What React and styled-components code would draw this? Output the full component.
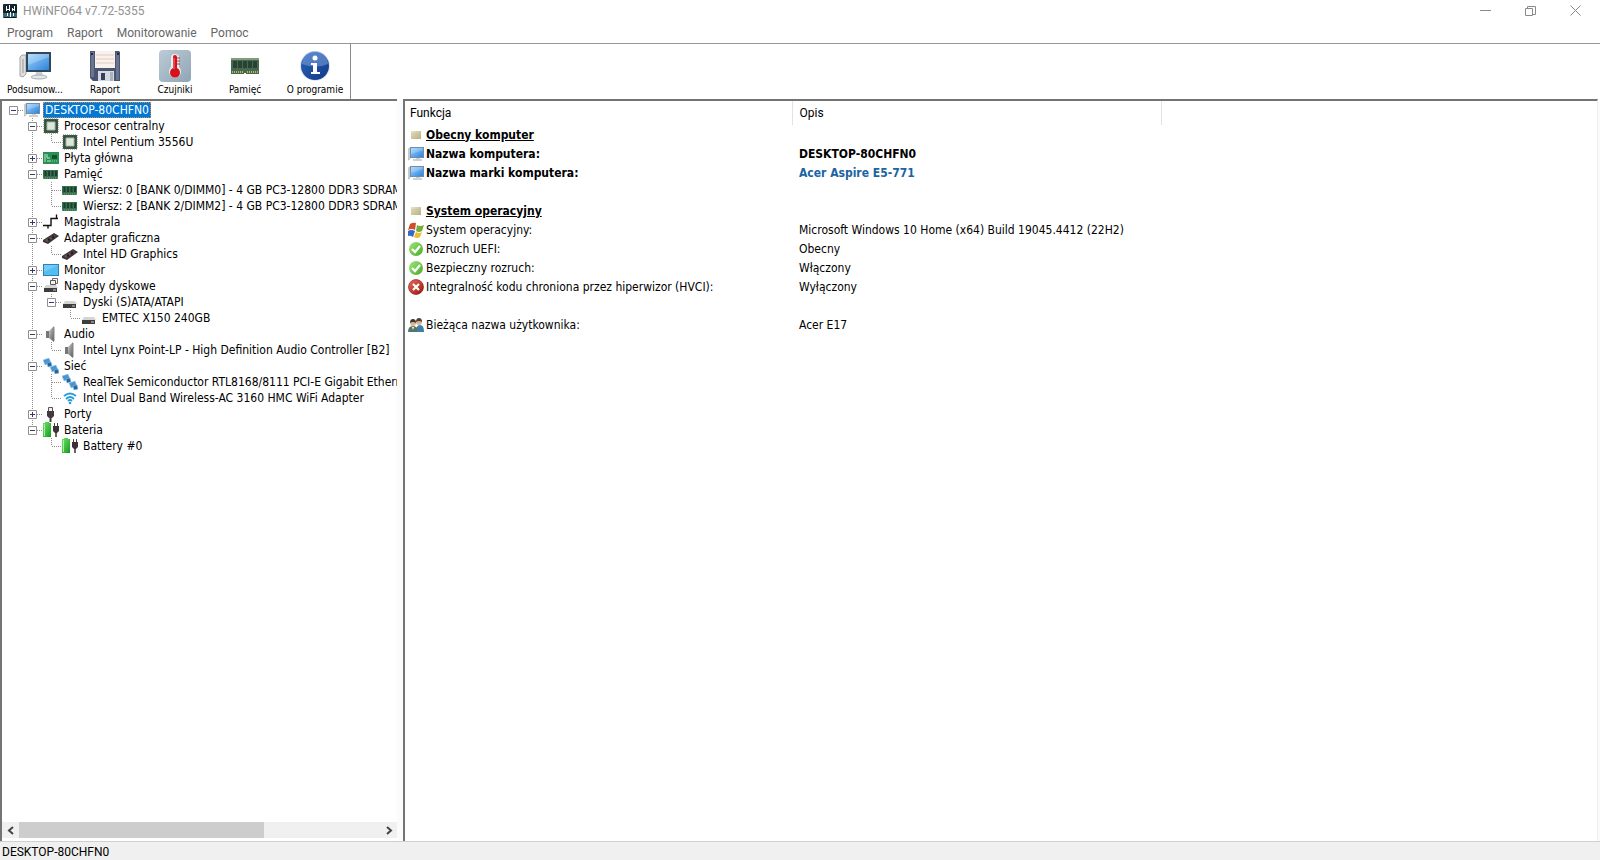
import React, { useState } from 'react';
import styled, { createGlobalStyle, css } from 'styled-components';

const uiFont = 'Roboto, "Noto Sans", sans-serif';
const listFont = '"DejaVu Sans Condensed", "DejaVu Sans", sans-serif';

const GlobalStyle = createGlobalStyle`
  * {
    box-sizing: border-box;
  }

  body {
    margin: 0;
    overflow: hidden;
    background: #fff;
    color: #000;
    font-family: ${listFont};
    font-size: 12px;
  }

  button {
    margin: 0;
    padding: 0;
    border: 0;
    background: none;
    color: inherit;
    font: inherit;
  }
`;

const Window = styled.div`
  display: flex;
  flex-direction: column;
  height: 100vh;
`;

const TitleBar = styled.header`
  display: flex;
  align-items: center;
  height: 22px;
  padding: 0 2px;
  color: #929292;
  font-family: ${uiFont};

  h1 {
    flex: 1;
    margin: 0;
    padding-left: 5px;
    font-size: 12px;
    font-weight: 400;
  }
`;

const WindowButton = styled.button`
  display: flex;
  align-items: center;
  justify-content: center;
  width: 45px;
  height: 20px;
  align-self: flex-start;
`;

const MenuBar = styled.nav`
  display: flex;
  height: 22px;
  border-bottom: 1px solid #979797;
  color: #666;
  font-family: ${uiFont};

  button {
    padding: 0 7px;
  }
`;

const ToolBar = styled.div`
  display: flex;
  align-self: flex-start;
  height: 55px;
  border-right: 1px solid #8a8a8a;
`;

const ToolButton = styled.button`
  display: flex;
  flex-direction: column;
  align-items: center;
  gap: 1px;
  width: 70px;
  padding-top: 6px;
  line-height: 14px;
  font-size: 10px;
`;

const Panels = styled.main`
  display: flex;
  flex: 1;
  gap: 6px;
  min-height: 0;
  padding-right: 2px;
  background: #fbfbfb;
`;

const panelBorder = css`
  border-top: 2px solid #747474;
  border-left: 2px solid #747474;
  background: #fff;
`;

const TreePanel = styled.section`
  ${panelBorder}
  display: flex;
  flex-direction: column;
  flex: 0 0 397px;
  min-width: 0;
`;

const Tree = styled.ul`
  flex: 1;
  margin: 0;
  padding: 1px 0 0 2px;
  overflow: hidden;
  list-style: none;

  ul {
    margin: 0;
    padding: 0;
    list-style: none;
  }
`;

const TreeRow = styled.div`
  display: flex;
  align-items: center;
  height: 16px;
  white-space: nowrap;
`;

const dotsDown = 'repeating-linear-gradient(#8d8d8d 0 1px, transparent 1px 2px)';
const dotsAcross =
  'repeating-linear-gradient(90deg, #8d8d8d 0 1px, transparent 1px 2px)';

const guides = {
  none: 'none',
  root: `${dotsAcross} 10px 8px / 9px 1px no-repeat`,
  line: `${dotsDown} 9px 0 / 1px 16px no-repeat`,
  tee: `${dotsDown} 9px 0 / 1px 16px no-repeat, ${dotsAcross} 10px 8px / 9px 1px no-repeat`,
  elbow: `${dotsDown} 9px 0 / 1px 8px no-repeat, ${dotsAcross} 10px 8px / 9px 1px no-repeat`,
};

const Guide = styled.span`
  display: flex;
  flex: none;
  align-items: center;
  justify-content: center;
  width: 19px;
  height: 16px;
  background: ${({ $kind }) => guides[$kind]};
`;

const Expander = styled.button`
  display: flex;
  width: 9px;
  height: 9px;
  background: #fff;
`;

const TreeItem = styled.span`
  display: flex;
  gap: 3px;
  padding-left: 1px;
`;

const TreeLabel = styled.span`
  height: 16px;
  padding: 0 2px;
  line-height: 16px;

  ${({ $selected }) =>
    $selected &&
    css`
      outline: 1px dotted #d98a3a;
      outline-offset: -1px;
      background: #0078d7;
      color: #fff;
    `};
`;

const ScrollBar = styled.div`
  display: flex;
  height: 16px;
  margin-bottom: 3px;
  background: #f0f0f0;

  button {
    display: flex;
    align-items: center;
    justify-content: center;
    width: 17px;
  }
`;

const ScrollTrack = styled.div`
  flex: 1;
`;

const ScrollThumb = styled.div`
  width: 68%;
  height: 100%;
  background: #cdcdcd;
`;

const DetailsPanel = styled.section`
  ${panelBorder}
  flex: 1;
  min-width: 0;
  border-right: 1px solid #efefef;
`;

const DetailsTable = styled.table`
  width: 100%;
  border-collapse: collapse;
  table-layout: fixed;

  th {
    height: 24px;
    padding: 0 5px 1px;
    border-right: 1px solid #e2e2e2;
    font-family: ${uiFont};
    font-weight: 400;
    text-align: left;
  }

  th:last-child {
    border-right: 0;
  }

  td {
    height: 19px;
    padding: 0 5px;
    line-height: 16px;
    white-space: nowrap;
  }

  td:first-child {
    padding-left: 3px;
  }

  th + th,
  td + td {
    padding-left: 7px;
  }
`;

const Column = styled.col`
  width: ${({ $width }) => $width};
`;

const Feature = styled.span`
  display: flex;
  align-items: center;
  gap: 2px;
  font-weight: ${({ $bold }) => ($bold ? 700 : 400)};
  text-decoration: ${({ $heading }) => ($heading ? 'underline' : 'none')};
`;

const Value = styled.span`
  color: ${({ $color }) => $color || 'inherit'};
  font-weight: ${({ $bold }) => ($bold ? 700 : 400)};
`;

const StatusBar = styled.footer`
  height: 19px;
  padding-left: 2px;
  border-top: 1px solid #d0d0d0;
  background: #f0f0f0;
  font-family: ${uiFont};
  line-height: 20px;
`;

const IconBox = styled.svg`
  display: block;
  flex: none;
`;

const Gradient = ({ id, from, to }) => (
  <linearGradient id={id} x1="0" y1="0" x2="1" y2="1">
    <stop offset="0" stopColor={from} />
    <stop offset="1" stopColor={to} />
  </linearGradient>
);

const Gradients = () => (
  <IconBox width="0" height="0" aria-hidden="true">
    <defs>
      <Gradient id="screen" from="#9bd3fb" to="#2f83dc" />
      <Gradient id="horn" from="#d2d2d2" to="#555" />
      <Gradient id="cell" from="#6fe36a" to="#159a1c" />
      <Gradient id="info" from="#2b62ba" to="#123a86" />
      <Gradient id="sensor" from="#bccbd6" to="#8fa5b5" />
      <Gradient id="good" from="#a4e67c" to="#45ab27" />
      <Gradient id="bad" from="#e8705c" to="#9c130b" />
      <Gradient id="tan" from="#e8e4c4" to="#b4ac80" />
      <Gradient id="logo" from="#1b2a33" to="#0b1a22" />
    </defs>
  </IconBox>
);

const plugShape = (
  <>
    <path d="M10.500 1v4M13.500 1v4" stroke="#444" />
    <path d="M9 4h6v5l-2 2h-2L9 9z" fill="#3a3236" />
    <path d="M12 10v5" stroke="#3a3236" strokeWidth="1.500" />
  </>
);

const driveShape = (
  <>
    <path d="M3 7h10l2 3H1z" fill="#d5d5d5" />
    <path d="M1 10h13v4H1z" fill="#3d3d3d" />
    <path d="M10 12h3" stroke="#cfcfcf" />
  </>
);

const networkNode = (
  <>
    <path d="M0 2l6-2 2 5-6 2z" fill="#4796d2" stroke="#a5cfea" strokeWidth=".6" />
    <path d="M4 5l4-1 1 4-4 1z" fill="#24659f" stroke="#8cb9d8" strokeWidth=".6" />
  </>
);

const icons = {
  logo: [
    16,
    <>
      <rect x="1" y="1" width="14" height="14" rx="1" fill="url(#logo)" />
      <path d="M1 10h14v4H1z" fill="#4d9aab" opacity=".6" />
      <path d="M4.500 3v5M7.500 2v6M10.500 5v3M12.500 3v5" stroke="#fff" />
      <path d="M4.500 6.500h3M10.500 6.500h2" stroke="#fff" />
      <path d="M5.500 10v3M8.500 9v5M11.500 10v3" stroke="#fff" />
    </>,
  ],
  computer: [
    32,
    <>
      <path d="M1 7l2-2h4v19l-3 3-3-1z" fill="#dedede" stroke="#a5a5a5" />
      <path d="M4 9v14" stroke="#999" />
      <path d="M17 22h6l1 5h-8z" fill="#c9ced2" />
      <ellipse cx="20" cy="27" rx="8" ry="2" fill="#e4e7e9" stroke="#a9afb3" />
      <path d="M7 2h25v20H7z" fill="#30475c" />
      <path d="M9 4h21v16H9z" fill="url(#screen)" />
      <path d="M9 4h21v3L9 15z" fill="#fff" opacity=".22" />
    </>,
  ],
  pc: [
    16,
    <>
      <path d="M0 3l2-1v11l-1 1H0z" fill="#d6d6d6" stroke="#b0b0b0" strokeWidth=".6" />
      <path d="M2 1h14v11H2z" fill="#6c8fae" />
      <path d="M3 2h12v9H3z" fill="url(#screen)" />
      <path d="M3 2h12v2L3 8z" fill="#fff" opacity=".2" />
      <path d="M8 12h4v1h2v2H5v-2h3z" fill="#cdd2d6" />
    </>,
  ],
  floppy: [
    32,
    <>
      <path d="M1 1h29l1 1v29H4l-3-3z" fill="#485471" />
      <path d="M2 2h3v25H2zM27 3h3v27h-3z" fill="#69748f" />
      <path d="M6 1h20v17H6z" fill="#faf1ed" />
      <path d="M7 5h18M7 9h18M7 13h18" stroke="#e2cbc4" />
      <path d="M9 21h16v10H9z" fill="#d5dbe1" />
      <path d="M12 23h4v7h-4z" fill="#35405d" />
      <path d="M21 22h3v9h-3z" fill="#aab4bf" />
      <path d="M2 3h2v2H2zM28 3h2v2h-2z" fill="#1f2940" />
    </>,
  ],
  sensors: [
    32,
    <>
      <rect x="0" y="0" width="32" height="32" rx="4" fill="url(#sensor)" />
      <path d="M12 8a4 4 0 0 1 8 0v9a6 6 0 1 1-8 0z" fill="#e9eef1" />
      <path d="M14 7a2 2 0 0 1 4 0v11a5 5 0 1 1-4 0z" fill="#d5121c" />
      <path d="M18 8h3M18 11h3M18 14h3" stroke="#b33d43" />
      <path d="M15 8v11" stroke="#f18288" />
    </>,
  ],
  memory: [
    32,
    <>
      <path d="M2 8h28v16H17v-1h-2v1H2z" fill="#456a50" />
      <path d="M2 8h28v2H2z" fill="#7f9b80" />
      <path d="M4 11h4v7H4zM9 11h4v7H9zM14 11h4v7h-4zM19 11h4v7h-4zM24 11h4v7h-4z" fill="#2b4133" />
      <path d="M3 22h11M18 22h11" stroke="#bdb36c" strokeWidth="2" strokeDasharray="1 1" />
    </>,
  ],
  about: [
    32,
    <>
      <circle cx="16" cy="16" r="15" fill="#dce5f1" />
      <circle cx="16" cy="16" r="14" fill="url(#info)" />
      <path d="M3 14a13 13 0 0 1 26 0q-12 5-26 0z" fill="#7ba3dc" opacity=".55" />
      <circle cx="16" cy="8" r="2.500" fill="#fff" />
      <path d="M12 13h6v9h3v2h-9v-2h2v-7h-2z" fill="#fff" />
    </>,
  ],
  cpu: [
    16,
    <>
      <path d="M1 1h14v14H1z" fill="#36513f" />
      <path d="M1 1h14v14H1z" stroke="#5b735f" strokeDasharray="1 1" />
      <path d="M4 4h8v8H4z" fill="#dce8dc" stroke="#a5b8a6" />
    </>,
  ],
  board: [
    16,
    <>
      <path d="M0 2h16v12H0z" fill="#279052" />
      <path d="M2 4v8M4 11h4M4 4v4h3" stroke="#bde5c6" fill="none" />
      <path d="M9 5h5v4H9z" fill="#164f30" />
      <path d="M9 11h5" stroke="#8ed2a1" strokeDasharray="1 1" />
    </>,
  ],
  ram: [
    16,
    <>
      <path d="M0 4h15v9H0z" fill="#37704f" />
      <path d="M2.500 5v5M6 5v5M9.500 5v5M13 5v5" stroke="#1c3e2c" strokeWidth="2" />
      <path d="M0 12h15" stroke="#81a68b" strokeDasharray="1 1" />
    </>,
  ],
  bus: [
    16,
    <path d="M0 11.500h5v3M5 11.500h3v-7h7M13.500 4.500v-4" fill="none" stroke="#111" strokeWidth="1.400" />,
  ],
  gpu: [
    16,
    <>
      <path d="M0 10l11-7 5 3-11 8-5-2z" fill="#40343a" />
      <path d="M2 10l9-5 2 1-9 6z" fill="#645359" />
      <path d="M5 10l2-1M9 8l2-2" stroke="#251b20" strokeWidth="2" />
    </>,
  ],
  monitor: [
    16,
    <>
      <path d="M0 2h16v12H0z" fill="#2a83b5" />
      <path d="M1 3h14v10H1z" fill="#56bdf1" />
      <path d="M1 3h14L1 10z" fill="#74cbf6" />
    </>,
  ],
  drives: [
    16,
    <>
      {driveShape}
      <path d="M7.500 2.500h5v4h-5z" fill="#f3f3f3" stroke="#555" />
      <path d="M9.500 2.500v-2h5v5h-2" fill="none" stroke="#666" />
    </>,
  ],
  drive: [16, driveShape],
  speaker: [
    16,
    <>
      <path d="M3 5h3v7H3z" fill="#777" />
      <path d="M6 5l5-5v16l-5-4z" fill="url(#horn)" />
      <path d="M11 1v14" stroke="#888" />
    </>,
  ],
  network: [
    16,
    <>
      {networkNode}
      <g transform="translate(7 7)">{networkNode}</g>
    </>,
  ],
  wifi: [
    16,
    <>
      <path d="M2 6q6-5 12 0M4 9q4-4 8 0M6 11q2-2 4 0" stroke="#2b9ed8" strokeWidth="1.800" fill="none" />
      <circle cx="8" cy="13" r="1.300" fill="#2b9ed8" />
    </>,
  ],
  port: [
    16,
    <>
      <path d="M5.500 1.500h4v4h-4z" fill="#eee" stroke="#555" />
      <path d="M4 5h7v5l-2 2H6l-2-2z" fill="#41393d" />
      <path d="M7.500 12v4" stroke="#41393d" strokeWidth="2" />
    </>,
  ],
  battery: [
    16,
    <>
      <path d="M2 0h4v1h2v14H0V1h2z" fill="url(#cell)" />
      <path d="M1.500 2v12" stroke="#a6f29f" />
      <g transform="translate(1 0)">{plugShape}</g>
    </>,
  ],
  group: [
    16,
    <>
      <path d="M3 4h10v8H3z" fill="url(#tan)" />
      <path d="M3 7h10M3 10h10" stroke="#c9c29b" strokeWidth=".6" />
    </>,
  ],
  windows: [
    16,
    <>
      <path d="M2 2q3-2 6-1L7 8Q4 6 0 8z" fill="#cf4f2b" />
      <path d="M9 3q3 2 7 0l-2 6q-3 2-6 0z" fill="#73ad3b" />
      <path d="M0 9q3-2 7 0l-2 6q-3-2-5-1z" fill="#3768c4" />
      <path d="M8 10q3 2 6 0l-2 5q-3 2-6 0z" fill="#e8bd2e" />
    </>,
  ],
  good: [
    16,
    <>
      <circle cx="8" cy="8" r="7" fill="url(#good)" />
      <path d="M4 8l3 3 5-6" fill="none" stroke="#fff" strokeWidth="2.200" />
    </>,
  ],
  bad: [
    16,
    <>
      <circle cx="8" cy="8" r="7.500" fill="url(#bad)" stroke="#7c140d" strokeWidth=".6" />
      <path d="M5 5l6 6M11 5l-6 6" stroke="#fff" strokeWidth="2.200" />
    </>,
  ],
  users: [
    16,
    <>
      <path d="M8 15q0-7 4-7t4 7z" fill="#3f7eaa" />
      <circle cx="11" cy="5" r="3" fill="#d8b493" />
      <path d="M8 5q0-4 3-4t3 4q-3-2-6 0z" fill="#4f4034" />
      <path d="M0 15q0-6 5-6t5 6z" fill="#54766a" />
      <circle cx="5" cy="6" r="3" fill="#deb891" />
      <path d="M2 6q0-4 3-4t3 4q-3-2-6 0z" fill="#3b342d" />
      <path d="M4 10l1 3 1-3z" fill="#fff" />
    </>,
  ],
};

const Icon = ({ name, size = 16 }) => {
  const [box, shape] = icons[name];
  return (
    <IconBox width={size} height={size} viewBox={`0 0 ${box} ${box}`} fill="none" aria-hidden="true">
      {shape}
    </IconBox>
  );
};

const menus = ['Program', 'Raport', 'Monitorowanie', 'Pomoc'];

const tools = [
  { icon: 'computer', label: 'Podsumow...' },
  { icon: 'floppy', label: 'Raport' },
  { icon: 'sensors', label: 'Czujniki' },
  { icon: 'memory', label: 'Pamięć' },
  { icon: 'about', label: 'O programie' },
];

const devices = {
  icon: 'pc',
  label: 'DESKTOP-80CHFN0',
  open: true,
  items: [
    {
      icon: 'cpu',
      label: 'Procesor centralny',
      open: true,
      items: [{ icon: 'cpu', label: 'Intel Pentium 3556U' }],
    },
    { icon: 'board', label: 'Płyta główna', items: [] },
    {
      icon: 'ram',
      label: 'Pamięć',
      open: true,
      items: [
        { icon: 'ram', label: 'Wiersz: 0 [BANK 0/DIMM0] - 4 GB PC3-12800 DDR3 SDRAM' },
        { icon: 'ram', label: 'Wiersz: 2 [BANK 2/DIMM2] - 4 GB PC3-12800 DDR3 SDRAM' },
      ],
    },
    { icon: 'bus', label: 'Magistrala', items: [] },
    {
      icon: 'gpu',
      label: 'Adapter graficzna',
      open: true,
      items: [{ icon: 'gpu', label: 'Intel HD Graphics' }],
    },
    { icon: 'monitor', label: 'Monitor', items: [] },
    {
      icon: 'drives',
      label: 'Napędy dyskowe',
      open: true,
      items: [
        {
          icon: 'drive',
          label: 'Dyski (S)ATA/ATAPI',
          open: true,
          items: [{ icon: 'drive', label: 'EMTEC X150 240GB' }],
        },
      ],
    },
    {
      icon: 'speaker',
      label: 'Audio',
      open: true,
      items: [
        {
          icon: 'speaker',
          label: 'Intel Lynx Point-LP - High Definition Audio Controller [B2]',
        },
      ],
    },
    {
      icon: 'network',
      label: 'Sieć',
      open: true,
      items: [
        {
          icon: 'network',
          label: 'RealTek Semiconductor RTL8168/8111 PCI-E Gigabit Ethernet',
        },
        { icon: 'wifi', label: 'Intel Dual Band Wireless-AC 3160 HMC WiFi Adapter' },
      ],
    },
    { icon: 'port', label: 'Porty', items: [] },
    {
      icon: 'battery',
      label: 'Bateria',
      open: true,
      items: [{ icon: 'battery', label: 'Battery #0' }],
    },
  ],
};

const details = [
  { icon: 'group', name: 'Obecny komputer', heading: true },
  { icon: 'pc', name: 'Nazwa komputera:', value: 'DESKTOP-80CHFN0', bold: true },
  {
    icon: 'pc',
    name: 'Nazwa marki komputera:',
    value: 'Acer Aspire E5-771',
    bold: true,
    color: '#1b64a0',
  },
  {},
  { icon: 'group', name: 'System operacyjny', heading: true },
  {
    icon: 'windows',
    name: 'System operacyjny:',
    value: 'Microsoft Windows 10 Home (x64) Build 19045.4412 (22H2)',
  },
  { icon: 'good', name: 'Rozruch UEFI:', value: 'Obecny' },
  { icon: 'good', name: 'Bezpieczny rozruch:', value: 'Włączony' },
  {
    icon: 'bad',
    name: 'Integralność kodu chroniona przez hiperwizor (HVCI):',
    value: 'Wyłączony',
  },
  {},
  { icon: 'users', name: 'Bieżąca nazwa użytkownika:', value: 'Acer E17' },
];

const TreeNode = ({ node, lines = [], kind = 'root' }) => {
  const [open, setOpen] = useState(Boolean(node.open));
  const childLines = [...lines, kind === 'tee' ? 'line' : 'none'];

  return (
    <li>
      <TreeRow>
        {lines.map((line, index) => (
          <Guide key={index} $kind={line} />
        ))}
        <Guide $kind={kind}>
          {node.items && (
            <Expander aria-label={node.label} aria-expanded={open} onClick={() => setOpen(!open)}>
              <IconBox width="9" height="9" viewBox="0 0 9 9" fill="none">
                <path d="M.5.5h8v8h-8z" stroke="#919191" />
                <path d={open ? 'M2 4.500h5' : 'M2 4.500h5M4.500 2v5'} stroke="#333c66" />
              </IconBox>
            </Expander>
          )}
        </Guide>
        <TreeItem>
          <Icon name={node.icon} />
          <TreeLabel $selected={kind === 'root'}>{node.label}</TreeLabel>
        </TreeItem>
      </TreeRow>
      {open && node.items && (
        <ul>
          {node.items.map((item, index) => (
            <TreeNode
              key={item.label}
              node={item}
              lines={childLines}
              kind={index === node.items.length - 1 ? 'elbow' : 'tee'}
            />
          ))}
        </ul>
      )}
    </li>
  );
};

const windowButtons = [
  { label: 'Minimalizuj', path: 'M0 5.500h11' },
  { label: 'Przywróć', path: 'M.5 3.500h7v7h-7zM2.500 3.500v-2h8v8h-3' },
  { label: 'Zamknij', path: 'M.5.5l10 10M10.500.5l-10 10' },
];

const App = () => (
  <>
    <GlobalStyle />
    <Gradients />
    <Window>
      <TitleBar>
        <Icon name="logo" />
        <h1>HWiNFO64 v7.72-5355</h1>
        {windowButtons.map(({ label, path }) => (
          <WindowButton key={label} aria-label={label}>
            <IconBox width="11" height="11" viewBox="0 0 11 11" fill="none">
              <path d={path} stroke="#8a8a8a" />
            </IconBox>
          </WindowButton>
        ))}
      </TitleBar>
      <MenuBar>
        {menus.map((menu) => (
          <button key={menu}>{menu}</button>
        ))}
      </MenuBar>
      <ToolBar>
        {tools.map(({ icon, label }) => (
          <ToolButton key={label}>
            <Icon name={icon} size={32} />
            {label}
          </ToolButton>
        ))}
      </ToolBar>
      <Panels>
        <TreePanel>
          <Tree>
            <TreeNode node={devices} />
          </Tree>
          <ScrollBar>
            <button aria-label="W lewo">
              <IconBox width="8" height="9" viewBox="0 0 8 9" fill="none">
                <path d="M6 1L2 4.500 6 8" stroke="#444" strokeWidth="2" />
              </IconBox>
            </button>
            <ScrollTrack>
              <ScrollThumb />
            </ScrollTrack>
            <button aria-label="W prawo">
              <IconBox width="8" height="9" viewBox="0 0 8 9" fill="none">
                <path d="M2 1l4 3.500L2 8" stroke="#444" strokeWidth="2" />
              </IconBox>
            </button>
          </ScrollBar>
        </TreePanel>
        <DetailsPanel>
          <DetailsTable>
            <colgroup>
              <Column $width="387px" />
              <Column $width="369px" />
              <Column $width="auto" />
            </colgroup>
            <thead>
              <tr>
                <th>Funkcja</th>
                <th>Opis</th>
                <th aria-hidden="true" />
              </tr>
            </thead>
            <tbody>
              {details.map(({ icon, name, value, heading, bold, color }, index) => (
                <tr key={index}>
                  <td>
                    {name && (
                      <Feature $bold={bold || heading} $heading={heading}>
                        <Icon name={icon} />
                        {name}
                      </Feature>
                    )}
                  </td>
                  <td>
                    <Value $bold={bold} $color={color}>
                      {value}
                    </Value>
                  </td>
                  <td />
                </tr>
              ))}
            </tbody>
          </DetailsTable>
        </DetailsPanel>
      </Panels>
      <StatusBar>DESKTOP-80CHFN0</StatusBar>
    </Window>
  </>
);

export default App;
